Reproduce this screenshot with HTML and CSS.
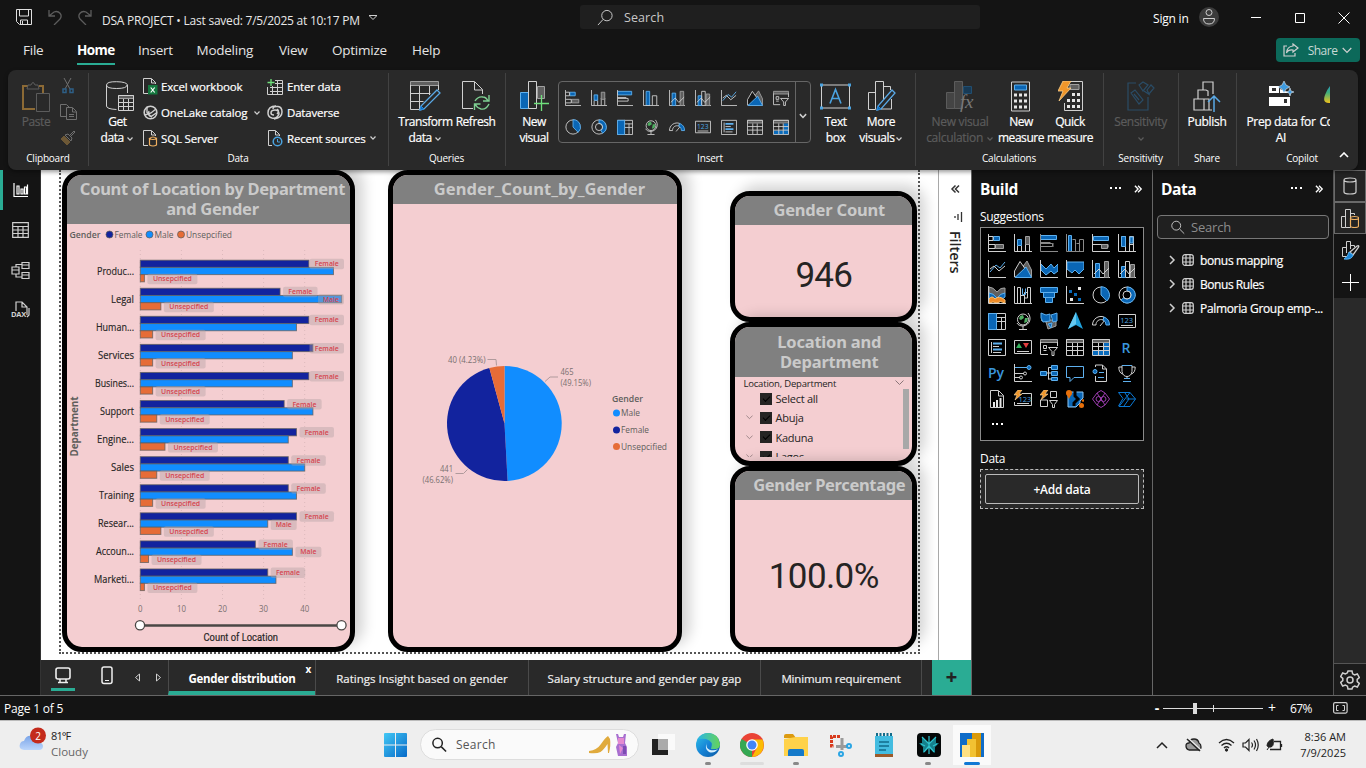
FILE: index.html
```html
<!DOCTYPE html>
<html lang="en">
<head>
<meta charset="utf-8">
<title>DSA PROJECT</title>
<link rel="stylesheet" href="styles.css">
</head>
<body>
<svg class="defs" aria-hidden="true">
  <defs>
    <linearGradient id="gEdge" x1="0" y1="0" x2="1" y2="1"><stop offset="0" stop-color="#2fc3e8"/><stop offset=".5" stop-color="#1684d6"/><stop offset="1" stop-color="#0c59a4"/></linearGradient>
    <linearGradient id="gEdge2" x1="0" y1="0" x2="1" y2="0"><stop offset="0" stop-color="#29b6e8"/><stop offset="1" stop-color="#66d457"/></linearGradient>
    <linearGradient id="gWin" x1="0" y1="0" x2="1" y2="1"><stop offset="0" stop-color="#42c8f5"/><stop offset="1" stop-color="#0669c8"/></linearGradient>
    <linearGradient id="gCloud" x1="0" y1="0" x2="0" y2="1"><stop offset="0" stop-color="#7aa4e8"/><stop offset="1" stop-color="#bcd6fb"/></linearGradient>
    <linearGradient id="gCop" x1="0" y1="0" x2="0" y2="1"><stop offset="0" stop-color="#1b8ee0"/><stop offset=".5" stop-color="#3fae7c"/><stop offset="1" stop-color="#f0c21b"/></linearGradient>
  </defs>
  <symbol id="sbar" viewBox="0 0 18 18"><path d="M.5 0v17.5H18"/><path class="bl" d="M5.500 2.500h6v4h-6z"/><path class="nf" d="M1 2.500h4v4H1"/><path class="gy" d="M7.500 10.500h8v4h-8z"/><path d="M1 10.500h6v4H1"/></symbol>
  <symbol id="scol" viewBox="0 0 18 18"><path d="M.5 0v17.500H18M3.500 12v5M7.500 12v5M11.500 9v8M15.500 9v8M3.500 11.500h4"/><path class="bl" d="M3.500 5.500h4v6h-4z"/><path class="gy" d="M11.500 2.500h4v8h-4z"/></symbol>
  <symbol id="cbar" viewBox="0 0 18 18"><path class="bl" d="M.5 1.500h16v4H.5z"/><path d="M.5 0v17.500H18M.5 8.500h10M.5 12.500h12v-3H.5"/></symbol>
  <symbol id="ccol" viewBox="0 0 18 18"><path class="bl" d="M3.500 1.500h4v16h-4z"/><path d="M.5 0v17.500H18M10.500 17V6.500h5V17"/></symbol>
  <symbol id="cbarg" viewBox="0 0 18 18"><path class="bl" d="M.5 1.500h16v4H.5z"/><path class="gl" d="M.5 0v17.500H18M.5 8.500h10M.5 12.500h12v-3H.5M13 9v4"/></symbol>
  <symbol id="ccolg" viewBox="0 0 18 18"><path class="bl" d="M2.500 1.500h3v16h-3z"/><path class="gl" d="M.5 0v17.500H18M6.500 5.500h3v12M13.500 17V5.500h4V17M10.500 9.500h3"/></symbol>
  <symbol id="hbar" viewBox="0 0 18 18"><path d="M.5 0v17.500H18M1 5.500h4M12 13.500h4v-3H1"/><path class="bl" d="M1.500 2.500h15v4h-15z"/><path class="gy" d="M9.500 10.500h6v4h-6z"/></symbol>
  <symbol id="hcol" viewBox="0 0 18 18"><path d="M.5 0v17.500H18M3.500 2.500h4v15M11.500 17V2.500h4V17M11.500 10.500h4"/><path class="bl" d="M3.500 2.500h4v10h-4z"/><path class="bl" d="M12 3h3v6h-3z"/></symbol>
  <symbol id="combo" viewBox="0 0 18 18"><path d="M.5 0v17.500H18"/><path class="bl" d="M3.500 3.500h4v14h-4z"/><path class="gy" d="M12.500 1.500h4v16h-4z"/><path d="M2 14l5-5 4 5 6-6"/></symbol>
  <symbol id="combo2" viewBox="0 0 18 18"><path d="M.5 0v17.500H18"/><path class="bl" d="M3.500 6.500h4v11h-4z"/><path d="M7.500 17V1.500h4V17"/><path class="gy" d="M12.500 4.500h4v13h-4z"/><path d="M2 14l5-5 4 5 6-6"/></symbol>
  <symbol id="line" viewBox="0 0 18 18"><path d="M.5 0v17.500H18"/><path class="ll" d="M2 12l6-7 4 3 5-6"/><path d="M2 9l4-3 5 5 6-5"/></symbol>
  <symbol id="area" viewBox="0 0 18 18"><path class="gy" d="M7 9l6-8 4.500 9v7H8z"/><path fill="#141414" d="M.5 11L6 1.500l7 10v5.500H.5z"/><path class="bl" d="M1 17.500L12 7l5.500 10.500z"/></symbol>
  <symbol id="sarea" viewBox="0 0 18 18"><path class="bl" d="M1 4l5 5 5-5 3 4 4-4v7l-4 3-3-3-5 4-5-5z"/><path d="M.5 0v17.500H18"/></symbol>
  <symbol id="farea" viewBox="0 0 18 18"><path class="bl" d="M1 2h17v7l-5 5-4-4-3 3-5-4z"/><path d="M.5 0v17.500H18"/></symbol>
  <symbol id="ribb" viewBox="0 0 18 18"><path class="gy" d="M1 1q4 0 8 5 4-5 8-4v5l-8 6-8-6z"/><path class="bl" d="M1 7q4 0 8 5 4-5 8-5v4l-8 6-8-6z"/><path class="or" d="M1 13q3-4 6 0 4-4 10 1v3q-5-3-8 0-4-2-8 0z"/><path d="M.5 0v17.500H18"/></symbol>
  <symbol id="wfall" viewBox="0 0 18 18"><path d="M.5 0v17.500H18M3.500 17V1.500h3V17M6.500 9.500h4M10.500 17V6.500h3M13.500 12V1.500h3V17M13.500 12h-3"/><path class="ll" d="M8.500 2.500v6h3v-6"/></symbol>
  <symbol id="funnel" viewBox="0 0 18 18"><path class="bl" d="M.5 1.500h17v5H.5zM3.500 6.500h11v5h-11zM5.500 11.500h7v5h-7z"/></symbol>
  <symbol id="scat" viewBox="0 0 18 18"><path d="M.5 0v17.500H18"/><path class="bf" d="M3 4h3v3H3zM8 7h3v3H8zM12 12h3v3h-3z"/><path class="wf" d="M12 1h3v3h-3zM4 12h3v3H4z"/></symbol>
  <symbol id="pie" viewBox="0 0 18 18"><circle cx="9" cy="9" r="8"/><path class="bl" d="M9 .8A8.200 8.200 0 0 1 14.800 15L9 9z"/></symbol>
  <symbol id="donut" viewBox="0 0 18 18"><circle cx="9" cy="9" r="8"/><path class="bl" d="M9 1a8 8 0 1 1-6 13l3-2.500A4 4 0 1 0 9 5z"/><circle cx="9" cy="9" r="4"/></symbol>
  <symbol id="donut2" viewBox="0 0 18 18"><circle cx="9" cy="9" r="8"/><path class="bl" d="M9 1a8 8 0 0 1 4 15l-2-3.500A4 4 0 0 0 9 5z"/><circle cx="9" cy="9" r="4"/></symbol>
  <symbol id="tree" viewBox="0 0 18 18"><path d="M.5 1.500h17v16H.5zM8.500 9.500h9M8.500 1v16M13.500 5v12M8.500 5.500h9"/><path class="bl" d="M.5 1.500h8v16h-8z"/></symbol>
  <symbol id="globe" viewBox="0 0 18 18"><circle cx="9" cy="7.500" r="5.500"/><path d="M14 1c4 5 2 12-5 13-3 0-5-1-6-3M9 14v3M5 17.500h8"/><path class="gn" d="M6 4l3-1 1 3-3 2-2-1zM11 6l3 0-1 4-3 1z"/></symbol>
  <symbol id="fmap" viewBox="0 0 18 18"><path class="gy" d="M1 8l5 2 2 7 8-3V8z"/><path class="bl" d="M1 1l5 2 4-1v7l-7 1-2-4z"/><path class="bl" d="M11 3l6-2v8l-4 1zM8 12l4-1-1 5z"/></symbol>
  <symbol id="azure" viewBox="0 0 18 18"><path fill="#1fa0da" stroke="none" d="M10 0l7 17-7-4-8 4z"/><path fill="#66c9f0" stroke="none" d="M10 0L2 17l8-5z"/></symbol>
  <symbol id="gauge" viewBox="0 0 18 18"><path d="M.5 13A8.500 8.500 0 0 1 12 5l-1 3a5 5 0 0 0-7 5zM8 14l5-6"/><path class="bl" d="M12 5a8.500 8.500 0 0 1 5.500 8h-3.500a5 5 0 0 0-3-5z"/></symbol>
  <symbol id="mcard" viewBox="0 0 18 18"><path d="M.5 1.500h17v16H.5zM3.500 4v11M5 8.500h6M5 14.500h8"/><path class="ll thick" d="M5 5.500h9M5 11.500h9"/></symbol>
  <symbol id="kpi" viewBox="0 0 18 18"><path d="M.5 2.500h17v13H.5zM3 13.500h12"/><path fill="#35b35d" stroke="none" d="M5 5l3 5H2z"/><path fill="#e33e3e" stroke="none" d="M9 5h6l-3 5z"/></symbol>
  <symbol id="slicer" viewBox="0 0 18 18"><path class="gy" d="M.5 1.500h17v3H.5z"/><path d="M.5 4v12.500H8M17.500 4v4M3.500 7.500h3v3h-3zM3.500 12.500h3M8.500 9.500h9l-3.500 4v4h-2v-4z"/></symbol>
  <symbol id="table" viewBox="0 0 18 18"><path class="gy" d="M.5 1.500h17v3H.5z"/><path d="M.5 1.500h17v16H.5zM.5 8.500h17M.5 12.500h17M6.500 5v12M11.500 5v12"/></symbol>
  <symbol id="matrix" viewBox="0 0 18 18"><path class="gy" d="M.5 1.500h17v3H.5z"/><path class="bf" d="M12 5h6v8h-6zM1 13h17v4.500H1z"/><path d="M.5 1.500h17v16H.5zM.5 8.500h17M.5 12.500h17M6.500 5v12M11.500 5v12"/></symbol>
  <symbol id="influ" viewBox="0 0 18 18"><path d="M.5 0v17.500H18M1 9.500h9M1 13.500h5"/><circle cx="11" cy="9.500" r="1.500"/><circle cx="7" cy="13.500" r="1.500"/><path class="ll" d="M1 3.500h12"/><circle class="bl" cx="15" cy="3.500" r="2"/></symbol>
  <symbol id="decomp" viewBox="0 0 18 18"><path d="M6 9h5M8.500 3.500v12M8.500 3.500H11M8.500 15h3"/><path class="bl" d="M.5 7.500h6v4h-6zM11.500 1.500h6v4h-6zM11.500 7.500h6v4h-6zM11.500 13.500h6v3h-6z"/></symbol>
  <symbol id="qa" viewBox="0 0 18 18"><path class="ll" d="M.5 2.500h17v11H8l-4 4v-4H.500z"/></symbol>
  <symbol id="narr" viewBox="0 0 18 18"><path d="M3.500 12v5.500h11V5l-4-4H3.500v2M10.500 1v4h4"/><circle class="bl" cx="3" cy="7.500" r="2"/><path class="ll" d="M7 8.500h5M6 13.500h6"/></symbol>
  <symbol id="trophy" viewBox="0 0 18 18"><path d="M4 1.500h10v6q-1 5-5 5t-5-5zM4 3H.8q0 6 4 7M14 3h3.200q0 6-4 7M9 12v3"/><path class="ll" d="M4 1.500h10M5 17.500h8M6 14.500h6"/></symbol>
  <symbol id="pagrep" viewBox="0 0 18 18"><path d="M2.500.5h8l5 5v12h-13zM10.500 1v5h5"/><path class="wf" d="M5 12h2v5H5zM8 10h2v7H8zM11.500 8h2v9h-2z"/></symbol>
  <symbol id="nslic" viewBox="0 0 18 18"><path d="M10.500 1.500h6v6h-6zM.5 10v6.500h7V10zM9.500 10.500h8l-3 4v3h-2v-3z"/><path class="bolt" d="M4 0h4L5 4h3L1 10l2-5H0z"/></symbol>
  <symbol id="arcgis" viewBox="0 0 18 18"><path fill="#0a66b5" stroke="#8cc6f5" d="M2 2h15v6l-3 3v2l-4 4H2z"/><path stroke="#000" stroke-width="3" d="M9 1v5l3 3-4 4v3"/><circle class="of" cx="3" cy="3" r="3"/><path class="of" d="M.5 4h5L3 9z"/><circle class="of" cx="15.500" cy="15.500" r="2.500"/><circle class="of" cx="17" cy="10.500" r="1.300"/></symbol>
  <symbol id="papps" viewBox="0 0 18 18"><g stroke="#9a3cac"><path d="M5 3l4-2.500L13 3l4.500 6L13 15l-4 2.500L5 15 .5 9zM5 3l8 12M13 3L5 15"/><circle cx="6.500" cy="9" r="2.500"/><circle cx="11.500" cy="9" r="2.500"/></g></symbol>
  <symbol id="pauto" viewBox="0 0 18 18"><path stroke="#0a78d4" d="M.5 2.500H12L17.500 9 12 16.500H1L12 2.500M.5 2.500L5 8.500 .5 16M7 3l4 6-5 7M8.500 9h9"/></symbol>
  <symbol id="calc" viewBox="0 0 20 30"><path d="M.5.5h18v29H.5z"/><path class="bl" d="M3.500 3.500h12v5h-12z"/><path class="wf" d="M3 12h3v3H3zM8 12h3v3H8zM13 12h3v3h-3zM3 18h3v3H3zM8 18h3v3H8zM13 18h3v3h-3zM3 24h3v3H3zM8 24h3v3H8zM13 24h3v3h-3z"/></symbol>
  <symbol id="chev" viewBox="0 0 8 8"><path stroke-width="1.200" d="M1.500 2.500L4 5.200 6.500 2.500"/></symbol>
  <symbol id="chevr" viewBox="0 0 8 10"><path stroke-width="1.500" d="M2 1l4 4-4 4"/></symbol>
  <symbol id="dchev" viewBox="0 0 10 10"><path stroke-width="1.500" d="M1 1.500l3.500 3.500L1 8.500M4.500 1.500L8 5l-3.500 3.500"/></symbol>
  <symbol id="mag" viewBox="0 0 18 18"><circle cx="10.500" cy="7" r="5.500"/><path d="M6.500 11L1 17"/></symbol>
  <symbol id="magr" viewBox="0 0 18 18"><circle cx="7" cy="7.500" r="5"/><path d="M11 11.500l5 5"/></symbol>
  <symbol id="tbl" viewBox="0 0 12 12"><path stroke-width="1.200" d="M3 .7h6A2.300 2.300 0 0 1 11.300 3v6A2.300 2.300 0 0 1 9 11.300H3A2.300 2.300 0 0 1 .7 9V3A2.300 2.300 0 0 1 3 .7zM.7 4h10.600M.7 8h10.600M4 .7v10.600M8 .7v10.600"/></symbol>
</svg>

<header class="titlebar">
  <div class="quick">
    <svg class="ic" width="16" height="16" viewBox="0 0 16 16"><path d="M.5.5h15v15h-12l-3-3zM3.500 1v6h9V1M4.500 15v-4h7v4M6.500 12v3" stroke="#e0e0e0"/></svg>
    <svg class="ic dim" width="14" height="16" viewBox="0 0 14 16"><path stroke-width="1.300" d="M1 1v6h6M1 7l5-4c5-2 9 3 6 7l-6 6"/></svg>
    <svg class="ic dim" width="14" height="16" viewBox="0 0 14 16"><path stroke-width="1.300" d="M13 1v6H7M13 7L8 3C3 1-1 6 2 10l6 6"/></svg>
  </div>
  <div class="doc-title">DSA PROJECT • Last saved: 7/5/2025 at 10:17 PM</div>
  <svg class="ic caret" width="10" height="7" viewBox="0 0 10 7"><path d="M1 1.500h8M1.500 2L5 5.500 8.500 2"/></svg>
  <div class="top-search"><svg class="ic" width="17" height="17"><use href="#mag"/></svg><span>Search</span></div>
  <div class="sign">Sign in</div>
  <svg class="avatar" width="20" height="20" viewBox="0 0 20 20"><circle cx="10" cy="10" r="10" fill="#3b3b3b"/><g fill="none" stroke="#cfcfcf"><circle cx="10" cy="5.500" r="3"/><path d="M4.500 11.500h11q0 5.500-5.500 5.500t-5.500-5.500z"/></g></svg>
  <div class="win-ctl">
    <svg class="ic" width="12" height="12" viewBox="0 0 12 12"><path d="M1 5.500h10" stroke="#fff"/></svg>
    <svg class="ic" width="12" height="12" viewBox="0 0 12 12"><path d="M1.500 1.500h9v9h-9z" stroke="#fff"/></svg>
    <svg class="ic" width="12" height="12" viewBox="0 0 12 12"><path d="M.5.5l11 11M11.500.5l-11 11" stroke="#fff"/></svg>
  </div>
</header>

<nav class="menu">
  <span class="m-file">File</span><span class="m-home"><b>Home</b></span><span class="m-ins">Insert</span><span class="m-mod">Modeling</span><span class="m-view">View</span><span class="m-opt">Optimize</span><span class="m-help">Help</span>
  <button class="share"><svg class="ic" width="16" height="14" viewBox="0 0 16 14"><path stroke-width="1.200" d="M4 3H1v10h11v-3M10 1l5 4-5 4V7Q5 6.500 3.500 10 4 3.500 10 3z"/></svg><span>Share</span><svg class="ic" width="10" height="7" viewBox="0 0 10 7"><path stroke-width="1.200" d="M.7 1L5 5.500 9.300 1"/></svg></button>
</nav>

<section class="ribbon">
  <div class="group g-clip">
    <div class="tools">
      <div class="big off w-paste"><svg class="ic" width="28" height="31" viewBox="0 0 28 31"><path stroke="#8c6a35" stroke-width="2" d="M6 5H1v23h12M17 5h4v8"/><path d="M6 4h3q2-5 4 0h3l1 4H5z"/><path d="M14.500 12.500h13v18h-13z"/></svg><span>Paste</span></div>
      <div class="minis">
        <svg class="ic dimx" width="14" height="16" viewBox="0 0 14 16"><path d="M3 0l6 11M10 0L4 11"/><path stroke="#2e5f86" stroke-width="1.500" d="M2 11h3v3.500H2zM9 11h3v3.500H9z"/></svg>
        <svg class="ic dimx" width="17" height="16" viewBox="0 0 17 16"><path d="M6 12.500H.5v-12h6l3 3M6.500 3.500h6l4 4v8h-10zM12.500 4v4h4M9 10.500h5M9 12.500h5"/></svg>
        <svg class="ic dimx" width="16" height="16" viewBox="0 0 16 16"><path d="M9 6l5-5 1 1-5 5M5 5l6 6 1-3-4-4z"/><path fill="#6d5836" stroke="#6d5836" d="M4 6l6 6-3 3-6-6z"/></svg>
      </div>
    </div>
    <label>Clipboard</label>
  </div>
  <div class="group g-data">
    <div class="tools">
      <div class="big w-get"><svg class="ic" width="28" height="31" viewBox="0 0 28 31"><path d="M21.500 12V4M.5 4v21q0 3 10 3.500M21 4q0 3.500-10.300 3.500T.5 4 10.700.7 21.500 4"/><path class="gy" d="M12.500 14.500h15v3h-15z"/><path d="M12.500 14.500h15v15h-15zM12.500 21.500h15M12.500 25.500h15M17.500 18v12M22.500 18v12"/></svg><span>Get<br>data <svg class="ic" width="8" height="8"><use href="#chev"/></svg></span></div>
      <div class="rows c1">
        <div><svg class="ic" width="15" height="17" viewBox="0 0 15 17"><path d="M5 15.500H.5V.5h8l4 4V6M8.500 1v4h4"/><path fill="#14793f" stroke="none" d="M5 7h9.500v9.500H5z"/><path stroke="#fff" stroke-width="1.200" d="M7.700 9.500l4 5M11.700 9.500l-4 5"/></svg><span>Excel workbook</span></div>
        <div><svg class="ic" width="15" height="15" viewBox="0 0 15 15"><circle cx="7.500" cy="7.500" r="6.300" stroke-width="1.600"/><path stroke-width="1.400" d="M4 1.500v6l4 4 6-4M2 10l6-2 5-4M6 6q-2 5 3 6"/></svg><span>OneLake catalog</span><svg class="ic" width="8" height="8"><use href="#chev"/></svg></div>
        <div><svg class="ic" width="15" height="17" viewBox="0 0 15 17"><path d="M5 15.500H.5V.5h8l4 4V6M8.500 1v4h4"/><path stroke="#f0b060" fill="#292929" stroke-width="1.200" d="M6.500 8.500v6.500q3.500 2 7 0V8.500q-3.500 2-7 0 3.500-3 7 0"/></svg><span>SQL Server</span></div>
      </div>
      <div class="rows c2">
        <div><svg class="ic" width="16" height="16" viewBox="0 0 16 16"><path d="M8 1.500h7.500v14H.500V8M3 8.500h12M3 12.500h12M5.500 7v8M10.500 2v13M8 4.500h7"/><path stroke="#6fe07c" stroke-width="1.300" d="M4 0v7M.5 3.500h7"/></svg><span>Enter data</span></div>
        <div><svg class="ic" width="16" height="15" viewBox="0 0 16 15"><path stroke-width="1.500" d="M9 1Q1 1 1 8q0 4 4 5 5 1 7-4 0-4-4-4-4 0-4 3 0 2 3 2M7 14q8-1 8-7 0-5-4-5.500Q6 1 6 4M10 4q3 2 0 5"/></svg><span>Dataverse</span></div>
        <div><svg class="ic" width="16" height="17" viewBox="0 0 16 17"><path d="M5 15.500H1.500V.5h7l4 4V6M8.500 1v4h4"/><circle stroke="#4ba3e0" stroke-width="1.500" cx="10.500" cy="11.500" r="4.300"/><path stroke="#4ba3e0" d="M10.500 9v3h2.500"/></svg><span>Recent sources</span><svg class="ic" width="8" height="8"><use href="#chev"/></svg></div>
      </div>
    </div>
    <label>Data</label>
  </div>
  <div class="group g-query">
    <div class="tools">
      <div class="big w-trans"><svg class="ic" width="31" height="31" viewBox="0 0 31 31"><path class="gy" d="M.5.5h28v4H.5z"/><path d="M28.500 4v5M.500 4v24.500H10M.5 12.500h20M.5 20.500h13M9.500 5v23M19.500 5v9"/><path stroke="#5aa9e6" fill="#292929" stroke-width="1.300" d="M27 9l3 3-16 16-4 1 1-4z"/><path fill="#0a6cbd" stroke="#2b88d8" d="M10 29l1-4 3 3z"/></svg><span>Transform<br>data <svg class="ic" width="8" height="8"><use href="#chev"/></svg></span></div>
      <div class="big w-ref"><svg class="ic" width="28" height="31" viewBox="0 0 28 31"><path d="M11 27.500H.5V.5h12l8 8V13M12.500 1v8h8"/><path stroke="#7ed092" stroke-width="1.400" d="M13 20q3-5 8-4 3 0 5 4M27 14v6h-6M27 23q-3 6-8 5-4-1-6-5M12.500 29v-6h6"/></svg><span>Refresh</span></div>
    </div>
    <label>Queries</label>
  </div>
  <div class="group g-insert">
    <div class="tools">
      <div class="big w-newv"><svg class="ic" width="29" height="31" viewBox="0 0 29 31"><path class="bl" d="M.5 11.500h8v16h-8z"/><path d="M8.500 27.500V.5h8v27z"/><path class="gy" d="M17.500 5.500h7v12h-7z"/><path stroke="#6fe07c" stroke-width="1.300" d="M21.500 14v16M14 22.500h15"/></svg><span>New<br>visual</span></div>
      <div class="gallery">
        <div class="gal-grid">
          <svg class="ic"><use href="#sbar"/></svg><svg class="ic"><use href="#scol"/></svg><svg class="ic"><use href="#cbar"/></svg><svg class="ic"><use href="#ccol"/></svg><svg class="ic"><use href="#combo"/></svg><svg class="ic"><use href="#combo2"/></svg><svg class="ic"><use href="#line"/></svg><svg class="ic"><use href="#area"/></svg><svg class="ic"><use href="#slicer"/></svg>
          <svg class="ic"><use href="#pie"/></svg><svg class="ic"><use href="#donut2"/></svg><svg class="ic"><use href="#tree"/></svg><svg class="ic"><use href="#globe"/></svg><svg class="ic"><use href="#gauge"/></svg><svg class="ic" viewBox="0 0 18 18"><path d="M.5 2.500h17v13H.5zM3 13.500h12"/><text class="ctxt" x="2.300" y="11.200">123</text></svg><svg class="ic"><use href="#mcard"/></svg><svg class="ic"><use href="#table"/></svg><svg class="ic"><use href="#matrix"/></svg>
        </div>
        <div class="gal-more"><svg class="ic" width="10" height="10"><use href="#chev"/></svg></div>
      </div>
      <div class="big w-text"><svg class="ic" width="31" height="28" viewBox="0 0 31 28"><path d="M1.500 2.500h28v23h-28z"/><path fill="#4ba3e0" stroke="none" d="M0 1h3v3H0zM28 1h3v3h-3zM0 24h3v3H0zM28 24h3v3h-3z"/><path stroke="#4ba3e0" stroke-width="1.600" d="M10 21l5.500-14L21 21M12 16h7"/></svg><span>Text<br>box</span></div>
      <div class="big w-more"><svg class="ic" width="29" height="31" viewBox="0 0 29 31"><path d="M1.500 11.500h7v17h-7zM8.500 28V.5h8V18M16.500 5.500h7V9M24.500 18v10H14"/><path stroke="#5aa9e6" fill="#292929" stroke-width="1.300" d="M25 9l3 3-14 16-4 1 1-4z"/><path fill="#0a6cbd" stroke="#2b88d8" d="M10 29l1-4 3 3z"/></svg><span>More<br>visuals<svg class="ic" width="8" height="8"><use href="#chev"/></svg></span></div>
    </div>
    <label>Insert</label>
  </div>
  <div class="group g-calc">
    <div class="tools">
      <div class="big off w-nvc"><svg class="ic" width="29" height="31" viewBox="0 0 29 31"><path fill="#444" d="M.5 11.500h8v16h-8zM8.500.5h8v27h-8z"/><path fill="#183a55" stroke="#214e70" d="M17.500 5.500h8v7h-8z"/><text class="fx" x="14" y="27">fx</text></svg><span>New visual<br>calculation <svg class="ic" width="8" height="8"><use href="#chev"/></svg></span></div>
      <div class="big w-nm"><svg class="ic" width="20" height="31"><use href="#calc"/></svg><span>New<br>measure</span></div>
      <div class="big w-qm"><svg class="ic" width="25" height="31" viewBox="0 0 25 31"><path d="M9 .5h15.500v29H6.500V22"/><path class="gy" d="M12 3.500h9v5h-9z"/><path class="wf" d="M9 18h3v3H9zM14 18h3v3h-3zM19 18h3v3h-3zM14 12h3v3h-3zM19 12h3v3h-3zM9 24h3v3H9zM14 24h3v3h-3zM19 24h3v3h-3z"/><path fill="#f0962a" stroke="#ffd28a" stroke-width=".8" d="M5 0h8L9 7h4L1 20l4-10H0z"/></svg><span>Quick<br>measure</span></div>
    </div>
    <label>Calculations</label>
  </div>
  <div class="group g-sens">
    <div class="tools"><div class="big off"><svg class="ic sens" width="28" height="31" viewBox="0 0 28 31"><path stroke-width="1.200" d="M9 2H1v27h20V16M4 12l4-3 8 10-4 4zM7 13l5 6M12 4l4-3 5 3-5 6zM20 9l4-5 3 3-5 6zM17 10l6 4"/></svg><span>Sensitivity<br><svg class="ic" width="8" height="8"><use href="#chev"/></svg></span></div></div>
    <label>Sensitivity</label>
  </div>
  <div class="group g-share">
    <div class="tools"><div class="big w-pub"><svg class="ic" width="28" height="31" viewBox="0 0 28 31"><path stroke-width="1.200" d="M1 18h10v11H1zM5 18V9h8l2 1v5M10 9V1h10v12M11 18h5v11h-5M16 29h3"/><path stroke="#5aa9e6" stroke-width="1.500" d="M21 31V15M15 21l6-6 6 6"/></svg><span>Publish</span></div></div>
    <label>Share</label>
  </div>
  <div class="group g-cop">
    <div class="tools cop-clip">
      <div class="big w-prep"><svg width="26" height="31" viewBox="0 0 26 31"><path fill="#fff" d="M1 5h10v7H1zM1 16h21v9H1zM12 8l10 4H12z"/><path fill="#333" d="M4 7h4v3H4zM16 18h3v4h-3z"/><path fill="#3e9be0" stroke="#fff" stroke-width=".5" d="M16 0l2 4 4 2-4 2-2 4-2-4-4-2 4-2zM22 7l1 3 3 1-3 1-1 3-1-3-3-1 3-1z"/></svg><span>Prep data for<br>AI</span></div>
      <div class="big w-cc"><svg width="14" height="31" viewBox="0 0 14 31"><path fill="url(#gCop)" d="M14 1Q6 1 1 14q-3 8 4 8h9z"/></svg><span>Copilot</span></div>
    </div>
    <label>Copilot</label>
    <svg class="ic collapse" width="10" height="6" viewBox="0 0 10 6"><path stroke-width="1.600" stroke="#fff" d="M1 5l4-4 4 4"/></svg>
  </div>
</section>

<main class="work">
  <aside class="rail-left">
    <div class="on"><svg class="ic" width="16" height="16" viewBox="0 0 16 16"><path stroke="#fff" stroke-width="1.200" d="M1 1v13.500h14M4 4h2v8H4zM8 7h2v5H8zM11.500 5h2v7h-2zM14.500 2.500v10"/></svg></div>
    <div><svg class="ic" width="17" height="16" viewBox="0 0 17 16"><path stroke-width="1.200" d="M.7.7h15.600v14.600H.7zM1 4.500h15M1 8h15M1 11.500h15M6 4v11M11 4v11"/></svg></div>
    <div><svg class="ic" width="19" height="19" viewBox="0 0 19 19"><path stroke-width="1.200" d="M11 1.500h7v6h-7zM1 6h7v7H1zM11 11.500h7v6h-7zM1 9h7M11 4h7M11 14h7M5 6V3.500h6M5 13v3h6"/></svg></div>
    <div><svg class="ic" width="19" height="18" viewBox="0 0 19 18"><path stroke-width="1.200" d="M5 10V1h6l5 5v8M11 1v5h5M18 7v7l-2 2"/><text class="dax" x="0" y="16">DAX</text></svg></div>
  </aside>
  <div class="center">
    <div class="stage">
      <div class="canvas">
        <div class="page">
          <article class="card tall">
            <h2 class="two">Count of Location by Department and Gender</h2>
            <svg id="bars" viewBox="67 224 283 422" width="283" height="422"></svg>
          </article>
          <article class="card tall second">
            <h2>Gender_Count_by_Gender</h2>
            <svg viewBox="393 204 284 442" width="284" height="442">
              <path fill="#118dff" d="M504.500 423.500V366A57.500 57.500 0 0 1 507.600 480.900z"/>
              <path fill="#12239e" d="M504.500 423.500L507.600 480.900A57.500 57.500 0 0 1 489.400 368z"/>
              <path fill="#e66c37" d="M504.500 423.500L489.400 368A57.500 57.500 0 0 1 504.500 366z"/>
              <path class="leader" d="M487.500 359.500h8.500l.5 6M545 381.500l5-4.500h8M455.500 473.500h8l4-4"/>
              <g class="plabel">
                <text x="448" y="363" textLength="37.500" lengthAdjust="spacingAndGlyphs">40 (4.23%)</text>
                <text x="560.500" y="375" textLength="13" lengthAdjust="spacingAndGlyphs">465</text><text x="560.500" y="386" textLength="30.500" lengthAdjust="spacingAndGlyphs">(49.15%)</text>
                <text x="440" y="472" textLength="13" lengthAdjust="spacingAndGlyphs">441</text><text x="422.500" y="483" textLength="30.500" lengthAdjust="spacingAndGlyphs">(46.62%)</text>
              </g>
              <text class="lg-b" x="612" y="402" textLength="31" lengthAdjust="spacingAndGlyphs">Gender</text>
              <circle cx="616.500" cy="413" r="3.500" fill="#118dff"/><circle cx="616.500" cy="430" r="3.500" fill="#12239e"/><circle cx="616.500" cy="446.500" r="3.500" fill="#e66c37"/>
              <g class="lg"><text x="621" y="416" textLength="19" lengthAdjust="spacingAndGlyphs">Male</text><text x="621" y="433" textLength="28" lengthAdjust="spacingAndGlyphs">Female</text><text x="621" y="450" textLength="46" lengthAdjust="spacingAndGlyphs">Unsepcified</text></g>
            </svg>
          </article>
          <div class="stack">
            <article class="card c-count"><h2>Gender Count</h2><p class="kpi">946</p></article>
            <article class="card c-loc"><h2 class="two">Location and<br>Department</h2>
              <div class="slicer">
                <div class="s-head"><span>Location, Department</span><svg class="ic" width="9" height="6" viewBox="0 0 9 6"><path d="M.5.5l4 4 4-4"/></svg></div>
                <ul>
                  <li><i></i><em></em><span>Select all</span></li>
                  <li><i><svg class="ic" width="7" height="5" viewBox="0 0 9 6"><path d="M.5.5l4 4 4-4"/></svg></i><em></em><span>Abuja</span></li>
                  <li><i><svg class="ic" width="7" height="5" viewBox="0 0 9 6"><path d="M.5.5l4 4 4-4"/></svg></i><em></em><span>Kaduna</span></li>
                  <li><i><svg class="ic" width="7" height="5" viewBox="0 0 9 6"><path d="M.5.5l4 4 4-4"/></svg></i><em></em><span>Lagos</span></li>
                </ul>
                <b class="thumb"></b>
              </div>
            </article>
            <article class="card c-pct"><h2>Gender Percentage</h2><p class="kpi">100.0%</p></article>
          </div>
        </div>
      </div>
      <div class="filters">
        <svg class="ic flip" width="10" height="10"><use href="#dchev"/></svg>
        <svg class="ic fic" width="10" height="10" viewBox="0 0 10 10"><path stroke-width="1.300" d="M8.500 0v10M5 2v6M2 4v2"/></svg>
        <span>Filters</span>
      </div>
    </div>
    <div class="tabs">
      <div class="dev on"><svg class="ic" width="16" height="17" viewBox="0 0 16 17"><rect x="1" y="1" width="14" height="11" rx="2" stroke-width="1.600" stroke="#eee"/><path stroke="#eee" stroke-width="1.500" d="M5 12v3M11 12v3M3 15.500h10"/></svg></div>
      <div class="dev"><svg class="ic" width="12" height="19" viewBox="0 0 12 19"><rect x="1" y="1" width="10" height="16.500" rx="2" stroke-width="1.500" stroke="#eee"/><path stroke="#eee" d="M4 14.500h4"/></svg></div>
      <div class="arr"><svg class="ic" width="7" height="9" viewBox="0 0 7 9"><path d="M5.500 1v7L1.500 4.500z"/></svg><svg class="ic" width="7" height="9" viewBox="0 0 7 9"><path d="M1.500 1v7l4-3.500z"/></svg></div>
      <div class="tab active">Gender distribution<sup>x</sup></div>
      <div class="tab t2">Ratings Insight based on gender</div>
      <div class="tab t3">Salary structure and gender pay gap</div>
      <div class="tab t4">Minimum requirement</div>
      <div class="add">+</div>
    </div>
  </div>
  <aside class="pane build">
    <div class="p-head"><h3>Build</h3><i class="dots"></i><svg class="ic" width="9" height="10"><use href="#dchev"/></svg></div>
    <h4>Suggestions</h4>
    <div class="viz">
      <svg class="ic"><use href="#sbar"/></svg><svg class="ic"><use href="#scol"/></svg><svg class="ic"><use href="#cbarg"/></svg><svg class="ic"><use href="#ccolg"/></svg><svg class="ic"><use href="#hbar"/></svg><svg class="ic"><use href="#hcol"/></svg>
      <svg class="ic"><use href="#line"/></svg><svg class="ic"><use href="#area"/></svg><svg class="ic"><use href="#sarea"/></svg><svg class="ic"><use href="#farea"/></svg><svg class="ic"><use href="#combo"/></svg><svg class="ic"><use href="#combo2"/></svg>
      <svg class="ic"><use href="#ribb"/></svg><svg class="ic"><use href="#wfall"/></svg><svg class="ic"><use href="#funnel"/></svg><svg class="ic"><use href="#scat"/></svg><svg class="ic"><use href="#pie"/></svg><svg class="ic"><use href="#donut"/></svg>
      <svg class="ic"><use href="#tree"/></svg><svg class="ic"><use href="#globe"/></svg><svg class="ic"><use href="#fmap"/></svg><svg class="ic"><use href="#azure"/></svg><svg class="ic"><use href="#gauge"/></svg><svg class="ic" viewBox="0 0 18 18"><path d="M.5 2.500h17v13H.5zM3 13.500h12"/><text class="ctxt" x="2.300" y="11.200">123</text></svg>
      <svg class="ic"><use href="#mcard"/></svg><svg class="ic"><use href="#kpi"/></svg><svg class="ic"><use href="#slicer"/></svg><svg class="ic"><use href="#table"/></svg><svg class="ic"><use href="#matrix"/></svg><svg class="ic" viewBox="0 0 18 18"><text class="rtxt" x="3.500" y="15">R</text></svg>
      <svg class="ic" viewBox="0 0 18 18"><text class="rtxt" x="0" y="14">Py</text></svg><svg class="ic"><use href="#influ"/></svg><svg class="ic"><use href="#decomp"/></svg><svg class="ic"><use href="#qa"/></svg><svg class="ic"><use href="#narr"/></svg><svg class="ic"><use href="#trophy"/></svg>
      <svg class="ic"><use href="#pagrep"/></svg><svg class="ic" viewBox="0 0 18 18"><path d="M8 3.500h9.500v12H.5V12M3 13.500h12"/><text class="ctxt" x="4.500" y="11.700">123</text><path class="bolt" d="M4 0h4L5 4h3L1 10l2-5H0z"/></svg><svg class="ic"><use href="#nslic"/></svg><svg class="ic"><use href="#arcgis"/></svg><svg class="ic"><use href="#papps"/></svg><svg class="ic"><use href="#pauto"/></svg>
      <i class="dots"></i>
    </div>
    <h4 class="d">Data</h4>
    <div class="drop"><button>+Add data</button></div>
  </aside>
  <aside class="pane data">
    <div class="p-head"><h3>Data</h3><i class="dots"></i><svg class="ic" width="9" height="10"><use href="#dchev"/></svg></div>
    <div class="p-search"><svg class="ic" width="16" height="16"><use href="#magr"/></svg><span>Search</span></div>
    <ul>
      <li><svg class="ic" width="8" height="10"><use href="#chevr"/></svg><svg class="ic" width="12" height="12"><use href="#tbl"/></svg><span class="n1">bonus mapping</span></li>
      <li><svg class="ic" width="8" height="10"><use href="#chevr"/></svg><svg class="ic" width="12" height="12"><use href="#tbl"/></svg><span class="n2">Bonus Rules</span></li>
      <li><svg class="ic" width="8" height="10"><use href="#chevr"/></svg><svg class="ic" width="12" height="12"><use href="#tbl"/></svg><span class="n3">Palmoria Group emp-...</span></li>
    </ul>
  </aside>
  <aside class="rail-right">
    <div class="box"><svg class="ic" width="14" height="18" viewBox="0 0 14 18"><path stroke-width="1.200" d="M1 3v12q0 2 6 2t6-2V3q0-2-6-2T1 3q0 2 6 2t6-2"/></svg></div>
    <div class="box"><svg class="ic" width="18" height="19" viewBox="0 0 18 19"><path d="M.5 7.500h4v11h-4zM4.500 18V.5h5v18h-5M9.500 4.500h4V6"/><path stroke="#f0b060" stroke-width="1.200" d="M9.500 9v8q0 1.500 4 1.500t4-1.500V9q0-1.500-4-1.500T9.500 9q0 1.500 4 1.500t4-1.500"/></svg></div>
    <div class="blk"><svg class="ic" width="19" height="19" viewBox="0 0 19 19"><path d="M6 15.500H1.500v-9h4M5.500 12V.5h4V8M9.500 4.500h4V6"/><path stroke-width="1.300" d="M9 11l7-6q3-1 1 2l-5 7z"/><path fill="#1a86d8" stroke="#58b0ee" d="M8 11l4 3q-1 5-9 4 4-2 5-7z"/></svg></div>
    <div class="blk"><svg class="ic" width="17" height="17" viewBox="0 0 17 17"><path stroke="#fff" d="M8.500 0v17M0 8.500h17"/></svg></div>
    <div class="gear"><svg class="ic" width="20" height="20" viewBox="0 0 20 20"><path stroke-width="1.500" d="M8 1h4l.6 2.800 2 1.100 2.700-.9 2 3.500-2.100 1.900v2.200l2.100 1.900-2 3.500-2.700-.9-2 1.100L12 19H8l-.6-2.800-2-1.100-2.700.9-2-3.500 2.100-1.900V8.400L.7 6.500l2-3.500 2.700.9 2-1.100z"/><circle cx="10" cy="10" r="3" stroke-width="1.500"/></svg></div>
  </aside>
</main>

<footer class="status">
  <span>Page 1 of 5</span>
  <div class="zoom"><b>-</b><svg class="ic" width="100" height="14" viewBox="0 0 100 14"><path stroke="#ddd" d="M0 7.500h100M50.500 4v7"/><path fill="#ddd" stroke="none" d="M30 2h4v11h-4z"/></svg><b class="pl">+</b><span>67%</span><svg class="ic" width="15" height="12" viewBox="0 0 15 12"><rect x=".6" y=".6" width="13.500" height="10.500" rx="1.500" stroke-width="1.200"/><path d="M5.500 3.500h-2v5h2M9.500 3.500h2v5h-2"/></svg></div>
</footer>

<div class="taskbar">
  <div class="weather">
    <svg width="28" height="28" viewBox="0 0 28 28"><path fill="url(#gCloud)" d="M6 23q-6-1-4-6 1-3 4-3 2-6 8-5 6 1 6 6 5 1 5 4 0 4-4 4z"/><circle cx="20" cy="8.500" r="8" fill="#c42b1c"/><text x="17.200" y="12.500" class="badge">2</text></svg>
    <div><span class="deg">81°F</span><span class="cl">Cloudy</span></div>
  </div>
  <div class="apps">
    <svg class="start" width="23" height="24" viewBox="0 0 23 24"><path fill="url(#gWin)" d="M0 1q0-1 1-1h10v11.500H0zM12 0h10q1 0 1 1v10.500H12zM0 12.500h11V24H1q-1 0-1-1zM12 12.500h11V23q0 1-1 1H12z"/></svg>
    <div class="t-search"><svg class="ic" width="17" height="17"><use href="#magr"/></svg><span>Search</span>
      <svg class="art" width="40" height="24" viewBox="0 0 40 24"><path fill="#e0aa3c" d="M1 18q8-1 12-7 4-6 7-8l2 3q1 6-1 14h-1l-.5-9q-4 6-7 8-4 2-11.500 1z"/><path fill="#a86fd0" d="M28 1h2l1 3h4l1-3h2l-1 9 2 4v9h-9l-2-9 2-4z"/><path fill="#e58ad0" d="M30 5h6v6h-6zM31 12l4 3-3 6z"/><path fill="#7b4db3" d="M35 13h3v8h-3z"/></svg></div>
    <div class="app"><svg width="26" height="24" viewBox="0 0 26 24"><path fill="#222" d="M1 6h16v16H1z"/><path fill="#fafafa" d="M7 1h17v16H7z"/><path fill="#ababab" d="M7 6h10v11H7z"/></svg></div>
    <div class="app"><svg width="24" height="24" viewBox="0 0 24 24"><circle cx="12" cy="12" r="12" fill="url(#gEdge)"/><path fill="url(#gEdge2)" d="M1 7Q5 0 12 0q10 0 12 11 0 5-5 5h-4q3-8-5-10-6-1-9 1z"/><path fill="#d8f1ff" d="M11 10q-2 5 3 7 5 1 8-1-4 5-9 3-5-3-2-9z"/></svg><s></s></div>
    <div class="app"><svg width="24" height="24" viewBox="0 0 24 24"><circle cx="12" cy="12" r="12" fill="#ea4335"/><path fill="#34a853" d="M12 12L1.600 6A12 12 0 0 0 12 24z"/><path fill="#fbbc04" d="M12 24A12 12 0 0 0 22.400 6.500H12l5 8z"/><circle cx="12" cy="12" r="5.800" fill="#fff"/><circle cx="12" cy="12" r="4.500" fill="#4285f4"/></svg><s class="wide"></s></div>
    <div class="app"><svg width="24" height="24" viewBox="0 0 24 24"><path fill="#dc9a10" d="M0 3q0-2 2-2h7l3 4H0z"/><path fill="#ffd24a" d="M0 6l12-2h12v19H0z"/><path fill="#1479c9" d="M4 23v-5q0-2 2-2h12q2 0 2 2v5z"/></svg><s></s></div>
    <div class="app"><svg width="24" height="24" viewBox="0 0 24 24"><path fill="none" stroke="#d83b1d" stroke-width="3" stroke-dasharray="3 1" d="M12 3.500H3.500V13H6"/><path fill="none" stroke="#9a9a9a" stroke-width="3" d="M14 5v12M8 13.500h12"/><circle cx="13" cy="21" r="2" fill="none" stroke="#2aa5e4" stroke-width="2"/><circle cx="21" cy="13" r="2" fill="none" stroke="#2aa5e4" stroke-width="2"/></svg></div>
    <div class="app"><svg width="20" height="24" viewBox="0 0 20 24"><path fill="#43bce0" d="M1 3h18v18H1z"/><path stroke="#126b8a" stroke-width="2" d="M3 0v4M6.500 0v4M10 0v4M13.500 0v4M17 0v4" stroke-dasharray="3 4"/><path stroke="#126b8a" stroke-width="1.600" d="M5 9h10M5 13h10M5 17h7"/><path fill="#9c5a2a" d="M1 21h18v3H1z"/></svg></div>
    <div class="app"><svg width="24" height="24" viewBox="0 0 24 24"><rect width="24" height="24" rx="4" fill="#050808"/><path fill="#16808c" d="M5 4l7 6 7-6v6h3l-4 4v6l-6-5-6 5v-6l-4-4h3z"/><path fill="none" stroke="#2fc4cf" stroke-width="1.200" d="M12 3v18M5 4l7 7 7-7M4 11l4 2M20 11l-4 2M7 19l5-6 5 6"/></svg><s></s></div>
    <div class="app pbi"><svg width="24" height="24" viewBox="0 0 24 24"><path fill="#0f6cc8" d="M0 0h24v24H0z"/><path fill="#d99a0b" d="M12 0h9v24h-9z"/><path fill="#f2c232" d="M7 6h9v18H7z"/><path fill="#ffe082" d="M2 12h8v12H2z"/></svg><s class="sel"></s></div>
  </div>
  <div class="tray">
    <svg class="ic" width="12" height="8" viewBox="0 0 12 8"><path stroke-width="1.500" d="M1 7l5-5 5 5"/></svg>
    <svg class="ic cl2" width="17" height="14" viewBox="0 0 17 14"><path fill="#999" stroke-width="1.300" d="M4 12q-3-1-3-4t3-3q1-4 5-4t5 4q2 1 2 4t-3 3z"/><path stroke="#eee" stroke-width="1.400" d="M3 0l13 12"/><path stroke-width="1.500" d="M2 1l13 12"/></svg>
    <svg class="ic" width="17" height="14" viewBox="0 0 17 14"><path stroke-width="1.300" d="M1 5q7.500-7 15 0M3.500 7.500q5-4.500 10 0M6 10q2.500-2.500 5 0"/><circle cx="8.500" cy="12" r="1.200" fill="#222"/></svg>
    <svg class="ic" width="17" height="14" viewBox="0 0 17 14"><path stroke-width="1.200" d="M1 5h2.500L7 1.500v11L3.500 9H1zM9.500 4.500q2 2.500 0 5M12 2.500q3 4.500 0 9M14.500 1q3.500 6 0 12"/></svg>
    <svg class="ic" width="17" height="14" viewBox="0 0 17 14"><path stroke-width="1.300" d="M8 3.500h6.500v8H4M15.500 6v3"/><path fill="#222" d="M1 8q0-5 6-7 1 6-1 7.500t-5-.5zM1 12l4-6"/></svg>
    <div class="clock"><span>8:36 AM</span><span>7/9/2025</span></div>
  </div>
</div>
<script src="chart.js"></script>
</body>
</html>
```

FILE: chart.js
```js
// Clustered bar chart: count of location per department, split by gender.
const rows = [
  ['Produc...', 41, 47, 1], ['Legal', 34, 49, 5], ['Human...', 41, 38, 3],
  ['Services', 42, 37, 3], ['Busines...', 41, 37, 3], ['Support', 35, 42, 4],
  ['Engine...', 38, 36, 6], ['Sales', 36, 40, 4], ['Training', 36, 38, 3],
  ['Resear...', 38, 31, 5], ['Accoun...', 28, 37, 2], ['Marketi...', 31, 33, 1]
];
const nameWidths = [37, 23, 38, 36, 39, 34, 37, 23, 35, 36, 38, 40];
const maleLabels = { 1: 5, 9: 5.8, 10: 5 };
const x0 = 140.3, unit = 4.11, top0 = 260.2, pitch = 28.07, h = 7.2, maxRight = 344;
const out = [];
const text = (x, y, s, cls, w) => out.push(`<text x="${x}" y="${y}" class="${cls}"${w ? ` textLength="${w}" lengthAdjust="spacingAndGlyphs"` : ''}>${s}</text>`);

text(69.5, 238, 'Gender', 'lg-b', 31);
[['Female', 109.5, '#12239e', 28], ['Male', 149.5, '#118dff', 19], ['Unsepcified', 181, '#e66c37', 46]].forEach(([s, x, c, w]) => {
  out.push(`<circle cx="${x}" cy="234.500" r="3.500" fill="${c}" class="mark"/>`);
  text(x + 5, 238, s, 'lg', w);
});
for (let t = 0; t <= 40; t += 10) {
  const x = x0 + t * unit;
  out.push(`<path class="grid" d="M${x} 250V600"/>`);
  text(x, 612, t, 'tick', t ? 9 : 4.5);
}
const pill = (x, y, s, w, tw) => {
  const px = Math.min(x + 3, maxRight - w);
  out.push(`<rect class="pill" x="${px}" y="${y}" width="${w}" height="10.500" rx="2"/>`);
  text(px + w / 2, y + 7.6, s, 'pill-t', tw);
};
rows.forEach(([name, f, m, u], i) => {
  const y = top0 + i * pitch;
  text(134, y + 14.5, name, 'cat', nameWidths[i]);
  [[f, '#12239e'], [m, '#118dff'], [u, '#e66c37']].forEach(([v, c], k) =>
    out.push(`<rect class="mark" x="${x0}" y="${y + k * 7.2}" width="${v * unit}" height="${h}" fill="${c}"/>`));
  pill(x0 + f * unit, y - 1.5, 'Female', 34.5, 24);
  if (i in maleLabels) pill(x0 + m * unit, y + maleLabels[i] + 0.8, 'Male', 26, 16);
  pill(x0 + u * unit, y + 13.5, 'Unsepcified', 50, 39);
});
out.push('<path d="M140 625.500H342" stroke="#4a4745" stroke-width="2.500"/>');
[140, 341.500].forEach(x => out.push(`<circle cx="${x}" cy="625.300" r="4.600" fill="#fff" stroke="#4a4745" stroke-width="1.300"/>`));
text(203.500, 641, 'Count of Location', 'axis', 74.5);
out.push('<text class="dept" transform="translate(78 456.500) rotate(-90)" textLength="60" lengthAdjust="spacingAndGlyphs">Department</text>');
document.getElementById('bars').innerHTML = out.join('');
```

FILE: styles.css
```css
* { box-sizing: border-box; }
body { margin: 0; width: 1366px; height: 768px; overflow: hidden; background: #141414; color: #fff; font: 12px "Open Sans", "Noto Sans", sans-serif; letter-spacing: -.2px; display: flex; flex-direction: column; }
h2, h3, h4, p, ul { margin: 0; padding: 0; font-weight: 400; }
ul { list-style: none; }
button { font: inherit; letter-spacing: inherit; color: inherit; }
svg { display: block; flex: none; }
.defs { position: absolute; width: 0; height: 0; }

.ic { fill: none; stroke: #d0d0d0; stroke-width: 1; }
.bl { fill: #0a66b5; stroke: #5eb0ee; }
.gy { fill: #606060; stroke: #a0a0a0; }
.gl { stroke: #8a8a8a; }
.ll { stroke: #5eb0ee; }
.thick { stroke-width: 2; }
.nf { fill: none; }
.or { fill: #f08c28; stroke: #ffc170; }
.gn { fill: #4fae62; stroke: none; }
.bf { fill: #0a6cbd; stroke: none; }
.wf { fill: #e6e6e6; stroke: none; }
.of { fill: #e8700a; stroke: none; }
.bolt { fill: #f0962a; stroke: #ffd9a0; stroke-width: .6; }
.ctxt { font: 7.500px "Open Sans", sans-serif; fill: #4ba3e0; stroke: none; letter-spacing: 0; }
.rtxt { font: 600 14px "Open Sans", sans-serif; fill: #3a96dd; stroke: none; letter-spacing: 0; }
.fx { font: italic 19px "Liberation Serif", serif; fill: #777; stroke: none; }
.dax { font: 700 7.500px "Open Sans", sans-serif; fill: #d0d0d0; stroke: none; }

.titlebar { height: 34px; display: flex; align-items: center; flex: none; }
.quick { display: flex; gap: 16px; width: 102px; padding-left: 16px; }
.dim { stroke: #5c5c5c; }
.doc-title { width: 266px; padding-top: 6px; color: #e8e8e8; white-space: nowrap; letter-spacing: -.23px; }
.caret { width: 10px; }
.top-search { margin-left: 202px; width: 400px; height: 24px; background: #1f1f1f; border-radius: 3px; display: flex; align-items: center; padding-left: 17px; gap: 10px; font-size: 12.500px; color: #c8c8c8; letter-spacing: .1px; }
.sign { margin-left: 173px; width: 46px; font-size: 12px; padding-top: 2px; white-space: nowrap; }
.win-ctl { display: flex; gap: 32px; margin-left: 31px; padding-top: 2px; }

.menu { height: 36px; display: flex; align-items: center; padding: 0 6px 4px 23px; font-size: 13.500px; flex: none; color: #e4e4e4; letter-spacing: -.25px; }
.m-file { width: 54px; } .m-home { width: 61px; } .m-ins { width: 58.500px; } .m-mod { width: 82.500px; } .m-view { width: 53px; } .m-opt { width: 80px; } .m-help { width: 60px; }
.m-home b { display: inline-block; color: #fff; line-height: 26px; border-bottom: 2px solid #2aac94; margin-top: 2px; letter-spacing: -.6px; }
.share { margin-left: auto; width: 84px; height: 24px; border: 0; border-radius: 4px; background: #0c695a; display: flex; align-items: center; padding: 0 0 0 7px; font-size: 12px; color: #c9d9d5; gap: 8px; letter-spacing: -.5px; }
.share svg + span { width: 31px; }
.share span + svg { margin-left: -4px; }

.ribbon { margin-left: 8px; width: 1350px; height: 100px; background: #292929; border-radius: 8px; display: flex; flex: none; position: relative; z-index: 2; box-shadow: 0 2px 4px rgba(0,0,0,.4); }
.group { position: relative; display: flex; flex-direction: column; padding-top: 4px; height: 100px; }
.group + .group::before { content: ""; position: absolute; left: 0; top: 3px; height: 93px; width: 1px; background: #424242; }
.tools { display: flex; height: 77px; }
.group label { text-align: center; font-size: 10px; line-height: 14px; color: #fff; font-weight: 500; }
.g-clip { width: 80px; } .g-data { width: 300px; } .g-query { width: 117px; } .g-insert { width: 410px; } .g-calc { width: 188px; } .g-sens { width: 75px; } .g-share { width: 58px; } .g-cop { width: 122px; }
.big { display: flex; flex-direction: column; align-items: center; padding-top: 7px; font-size: 12px; line-height: 16px; text-align: center; white-space: nowrap; letter-spacing: -.45px; -webkit-text-stroke: .2px; }
.big > svg { height: 31px; }
.big > span { margin-top: 2px; }
.big span svg { display: inline-block; vertical-align: -1px; }
.off { color: #5c5c5c; }
.off .ic { stroke: #5c5c5c; }
.off .sens { stroke: #2a4c66; }
.w-paste { width: 56px; }
.minis { display: flex; flex-direction: column; align-items: center; gap: 10px; padding-top: 4px; width: 8px; }
.dimx { stroke: #707070; }
.w-get { width: 55px; padding-left: 4px; }
.w-get > svg { margin-left: 4px; }
.rows { display: flex; flex-direction: column; font-size: 11.500px; letter-spacing: -.2px; white-space: nowrap; -webkit-text-stroke: .2px; }
.rows > div { height: 26px; display: flex; align-items: center; gap: 4px; }
.c1 { width: 124px; letter-spacing: -.17px; }
.c1 > div { gap: 3px; }
.c1 span + svg { margin-left: 3px; }
.c2 { width: 120px; }
.w-trans { width: 75px; } .w-ref { width: 25px; align-items: center; }
.w-newv { width: 53px; padding-left: 5px; }
.gallery { width: 253px; height: 62px; margin-top: 7px; border: 1px solid #666; border-radius: 4px; display: flex; }
.gal-grid { display: grid; grid-template-columns: repeat(9, 26px); grid-auto-rows: 29px; place-items: center; width: 236px; padding: 1px 0 0 1px; }
.gal-grid svg { width: 16px; height: 16px; }
.gal-more { border-left: 1px solid #666; flex: 1; display: grid; place-items: center; padding-top: 8px; }
.w-text { width: 49px; } .w-more { width: 42px; letter-spacing: -.3px; }
.w-nvc { width: 90px; letter-spacing: -.3px; } .w-nm { width: 32px; } .w-qm { width: 66px; }
.g-sens .big, .g-share .big { width: 100%; letter-spacing: -.3px; }
.cop-clip { width: 94px; overflow: hidden; }
.w-prep { width: 80px; flex: none; margin-left: 5px; letter-spacing: -.35px; }
.w-cc { flex: none; width: 40px; align-items: flex-start; padding-left: 0; }
.w-cc svg { margin-left: 3px; }
.w-cc > span { margin-left: -1.500px; }
.g-cop label { padding-left: 10px; }
.collapse { position: absolute; right: 9px; bottom: 12px; }

.work { height: 525px; display: flex; flex: none; }
.rail-left { width: 41px; border-right: 1px solid #333; }
.rail-left div { height: 40px; display: grid; place-items: center; padding-left: 1px; }
.rail-left .on { border-left: 3px solid #2aac94; padding-right: 1px; padding-left: 0; }
.center { width: 930px; display: flex; flex-direction: column; background: #fff; }
.stage { height: 490px; display: flex; background: #fff; }
.canvas { width: 898px; padding-left: 18px; border-right: 1px solid #a8a8a8; }
.page { width: 861px; height: 484px; border: 2px dotted #555; border-top: 0; display: flex; padding-left: .5px; }
.card { border: 5px solid #000; border-radius: 20px; background: #f4ced1; overflow: hidden; box-shadow: 8px -6px 14px rgba(0,0,0,.18); flex: none; color: #252423; }
.card h2 { background: #808080; color: #cacaca; font: 700 16.500px/20px "Noto Sans", sans-serif; height: 29px; padding: 4px 0 0 12px; text-align: center; white-space: nowrap; letter-spacing: -.2px; }
.card.tall { width: 293px; height: 482px; }
.tall h2.two { height: 49px; white-space: normal; padding-left: 9px; letter-spacing: -.3px; }
.card.second { margin-left: 33px; width: 294px; }
.second h2 { letter-spacing: .08px; padding-left: 10px; }
.stack { margin-left: 48px; padding-top: 21px; }
.stack .card { width: 187.500px; }
.c-count { height: 131px; } .c-loc { height: 144px; } .c-pct { height: 186px; }
.c-pct h2 { letter-spacing: -.35px; }
.c-loc h2.two { height: 50px; padding-top: 5px; }
.kpi { font: 35px "Roboto", sans-serif; text-align: center; line-height: 42px; }
.c-count .kpi { padding: 30px 0 0 1px; letter-spacing: -.9px; }
.c-pct .kpi { padding: 56px 0 0 1px; letter-spacing: -.6px; }
.slicer { position: relative; height: 80px; overflow: hidden; padding: 0 4px 0 9px; }
.s-head { display: flex; justify-content: space-between; align-items: center; height: 12px; font-size: 9.500px; padding-right: 4px; }
.s-head svg, .slicer li svg { stroke: #8a7578; }
.slicer li { display: flex; align-items: center; height: 19.300px; font-size: 11px; letter-spacing: -.25px; }
.slicer i { width: 16px; padding-left: 2px; }
.slicer em { width: 12px; height: 12px; background: #252423; margin-right: 4px; position: relative; }
.slicer em::after { content: ""; position: absolute; left: 3px; top: 3px; width: 6px; height: 3px; border: solid #000; border-width: 0 0 1px 1px; transform: rotate(-45deg); }
.slicer ul { height: 68px; overflow: hidden; }
.thumb { position: absolute; right: 3px; top: 12px; width: 6px; height: 60px; background: #a8a8a8; }
.filters { width: 32px; display: flex; flex-direction: column; align-items: center; color: #252423; }
.filters .ic { stroke: #333; }
.flip { transform: scaleX(-1); margin-top: 14px; }
.fic { margin: 18px 0 0 5px; }
.filters span { writing-mode: vertical-rl; font-size: 14.500px; font-weight: 600; letter-spacing: -.1px; margin-top: 9px; line-height: 18px; }

.mark { stroke: #605e5c; stroke-opacity: .75; stroke-width: 1; }
.grid { stroke: #dcb9bc; stroke-dasharray: 1 3; }
.pill { fill: #b3a3a5; fill-opacity: .42; }
.pill-t { font: 600 6.500px "Open Sans", sans-serif; fill: #d64550; text-anchor: middle; letter-spacing: 0; }
.cat, .axis { font: 10.500px "Open Sans", sans-serif; fill: #252423; text-anchor: end; letter-spacing: 0; stroke: #252423; stroke-width: .15; }
.axis { text-anchor: start; font-family: "Roboto", sans-serif; font-size: 10px; }
.tick { font: 8.500px "Open Sans", sans-serif; fill: #7a7070; text-anchor: middle; letter-spacing: 0; }
.lg { font: 9.500px "Open Sans", sans-serif; fill: #605e5c; letter-spacing: 0; }
.lg-b { font: 600 9.500px "Open Sans", sans-serif; fill: #605e5c; letter-spacing: 0; }
.dept { font: 700 10px "Open Sans", sans-serif; fill: #605e5c; letter-spacing: 0; }
.plabel { font: 8.500px "Open Sans", sans-serif; fill: #7a7070; letter-spacing: 0; }
.leader { fill: none; stroke: #b09a9c; }

.tabs { height: 35px; background: #292929; display: flex; font-size: 11.500px; white-space: nowrap; letter-spacing: 0; -webkit-text-stroke: .2px; }
.dev { width: 44px; display: flex; justify-content: center; padding-top: 6px; }
.dev.on { background: linear-gradient(#2aac94, #2aac94) 10px 28px / 24px 3px no-repeat; padding-top: 7px; }
.arr { width: 39px; display: flex; gap: 14px; align-items: center; padding-left: 5px; }
.tab { border-left: 1px solid #4a4a4a; display: flex; align-items: center; justify-content: center; padding-top: 2px; position: relative; color: #f0f0f0; }
.tab.active { width: 147px; font-weight: 700; color: #fff; border-bottom: 4px solid #2aac94; padding-top: 6px; letter-spacing: -.33px; -webkit-text-stroke: 0; }
.tab sup { position: absolute; right: 4px; top: 2px; font-size: 10px; line-height: 14px; }
.t2 { width: 213px; } .t3 { width: 232px; } .t4 { width: 162px; border-right: 1px solid #4a4a4a; letter-spacing: -.15px; }
.add { margin-left: auto; width: 39px; background: #2aac94; color: #222; display: grid; place-items: center; font-size: 20px; font-weight: 700; padding-bottom: 2px; }

.pane { width: 181px; border-left: 1px solid #666; padding: 0 8px; }
.p-head { height: 38px; display: flex; align-items: center; gap: 13px; }
.p-head h3 { flex: 1; font-size: 15.500px; font-weight: 700; letter-spacing: -.4px; }
.p-head .ic { stroke: #fff; }
.dots { width: 11px; height: 2px; background: repeating-linear-gradient(90deg, #fff 0 2px, transparent 2px 4.500px); }
.p-head .dots { margin-bottom: 3px; }
.build { padding-right: 9px; }
.build h4 { font-size: 12px; line-height: 17px; height: 19px; letter-spacing: -.3px; }
.viz { width: 164px; height: 214px; background: #000; border: 1px solid #8a8a8a; display: grid; grid-template-columns: repeat(6, 26px); grid-template-rows: repeat(7, 26px) 24px; place-items: center; padding: 2px 0 0 3px; }
.viz svg { width: 18px; height: 18px; }
.build h4.d { margin-top: 9px; height: 19px; }
.drop { width: 164px; height: 40px; border: 1px dashed #bbb; background: #292929; padding: 4px; display: flex; }
.drop button { flex: 1; background: #292929; border: 1px solid #bbb; border-radius: 2px; font-weight: 600; font-size: 12px; }
.pane.data { padding: 0 4px; }
.data .p-head { padding: 0 5px 0 4px; }
.p-search { height: 24px; margin-top: 7px; border: 1px solid #777; border-radius: 4px; background: #202020; display: flex; align-items: center; padding-left: 12px; gap: 5px; color: #8c8c8c; font-size: 13px; }
.data ul { padding: 9px 0 0 11px; }
.data li { height: 24px; display: flex; align-items: center; font-size: 12px; white-space: nowrap; -webkit-text-stroke: .2px; }
.data li svg + svg { margin: 0 6px; }
.n1 { letter-spacing: -.35px; } .n2 { letter-spacing: -.45px; } .n3 { letter-spacing: -.33px; }
.rail-right { width: 33px; background: #292929; border-left: 1px solid #555; display: flex; flex-direction: column; }
.rail-right div { height: 32px; display: grid; place-items: center; }
.rail-right .box { border: 1px solid #6a6a6a; background: #242424; }
.rail-right .blk { background: #141414; }
.rail-right .gear { margin-top: auto; border-top: 1px solid #555; background: #1b1b1b; }

.status { height: 25px; border-top: 1px solid #666; display: flex; align-items: center; justify-content: space-between; padding: 0 18px 0 4px; flex: none; }
.zoom { display: flex; align-items: center; }
.zoom b { font-size: 14px; margin-right: 4px; line-height: 12px; }
.zoom .pl { margin: 0 0 0 5px; font-weight: 400; width: 22px; }
.zoom span { width: 43px; letter-spacing: -.6px; }

.taskbar { height: 48px; background: #eee; border-top: 1px solid #bbb; display: flex; align-items: center; color: #222; font-size: 11px; flex: none; }
.weather { display: flex; width: 384px; padding-left: 18px; gap: 5px; align-items: flex-start; }
.weather div { display: flex; flex-direction: column; line-height: 16px; }
.weather svg { margin-top: -2px; }
.deg { letter-spacing: -.9px; margin-top: -1px; }
.cl { color: #666; font-size: 11.500px; letter-spacing: 0; }
.badge { font: 10px "Open Sans", sans-serif; fill: #fff; }
.apps { display: flex; align-items: center; width: 770px; }
.t-search { width: 219px; height: 31px; margin-left: 13px; border: 1px solid #ddd; border-radius: 16px; background: #fafafa; display: flex; align-items: center; padding-left: 10px; font-size: 12px; color: #555; gap: 8px; letter-spacing: .25px; }
.t-search .ic { stroke: #222; stroke-width: 1.600; }
.art { margin-left: 84px; }
.app { width: 44.100px; height: 40px; display: grid; place-items: center; position: relative; }
.t-search + .app { margin-left: 3px; width: 44px; }
.app s { position: absolute; bottom: 0; left: 19px; width: 6px; height: 3px; border-radius: 2px; background: #888; }
.app s.wide { left: 10px; width: 24px; background: #ddd; }
.app s.sel { left: 14px; width: 16px; background: #0f78d4; }
.app.pbi { background: linear-gradient(#fafafa, #fafafa) 3px 0 / 38px 40px no-repeat; margin-left: -1px; }
.tray { display: flex; align-items: center; width: 212px; padding-right: 20px; }
.tray .ic { stroke: #222; margin-left: 7px; }
.tray .ic:first-child { margin-left: 2px; }
.tray .ic.cl2 { margin: 0 9px 0 17px; }
.clock { margin-left: auto; display: flex; flex-direction: column; text-align: right; line-height: 16px; letter-spacing: 0; }
```
